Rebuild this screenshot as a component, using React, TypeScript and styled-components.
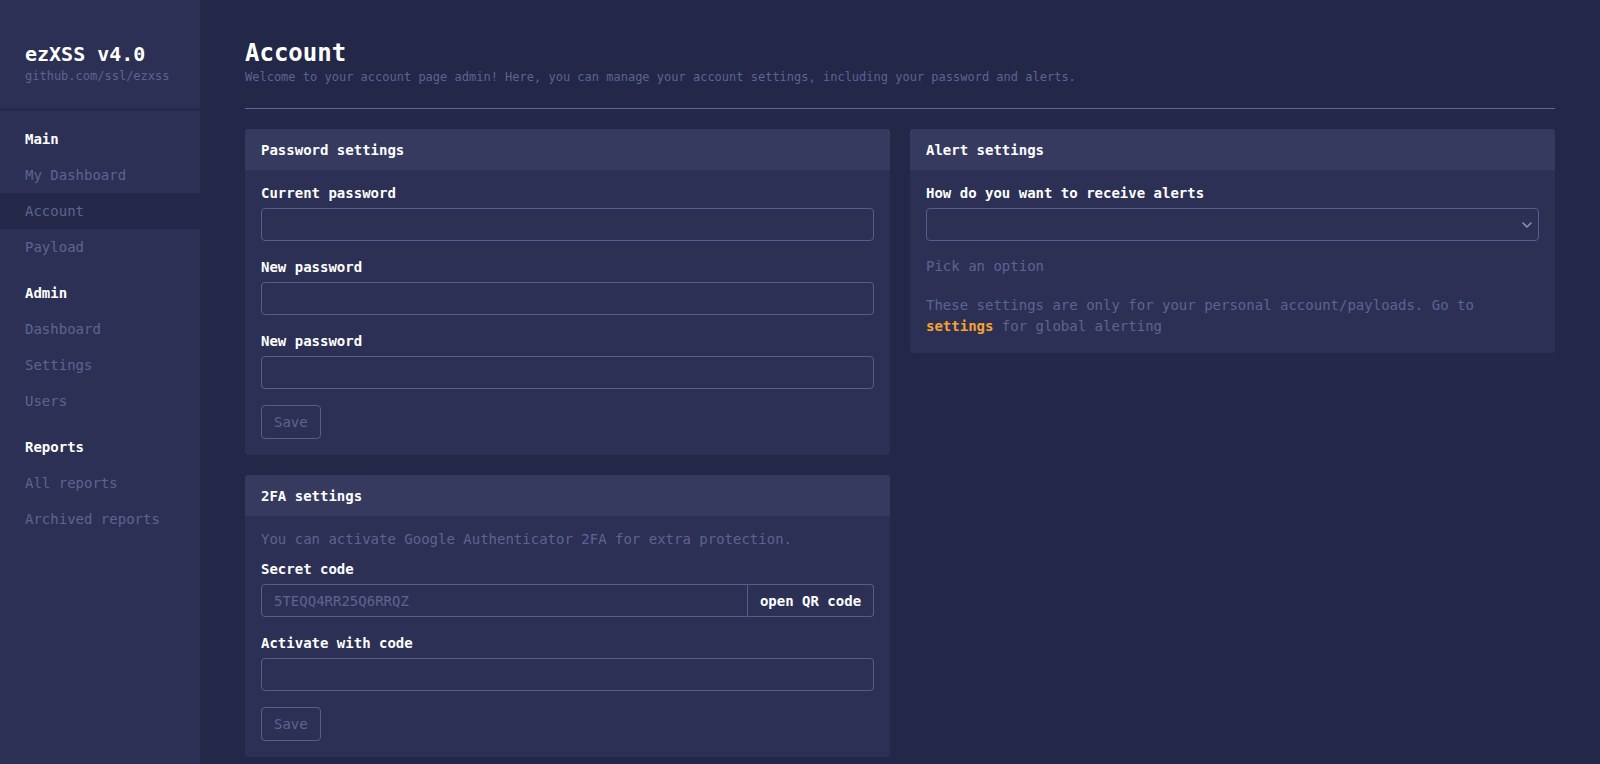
import styled, { createGlobalStyle } from "styled-components";

const GlobalStyle = createGlobalStyle`
  html, body {
    margin: 0;
    padding: 0;
    background: #232748;
  }
  * {
    box-sizing: border-box;
  }
  body {
    font-family: "DejaVu Sans Mono", "Liberation Mono", monospace;
    color: #ffffff;
  }
`;

const Layout = styled.div`
  display: flex;
  min-height: 100vh;
`;

const Sidebar = styled.aside`
  width: 200px;
  flex-shrink: 0;
  background: #2c3055;
  display: flex;
  flex-direction: column;
`;

const Brand = styled.div`
  height: 111px;
  padding: 42px 25px 0;
  border-bottom: 3px solid #262a4c;
`;

const BrandName = styled.div`
  font-size: 20px;
  line-height: 24px;
  font-weight: bold;
  color: #ffffff;
`;

const BrandLink = styled.div`
  margin-top: 2px;
  font-size: 12px;
  line-height: 16px;
  color: #5d6492;
`;

const Nav = styled.nav`
  display: flex;
  flex-direction: column;
`;

const NavHeading = styled.div`
  margin-top: 10px;
  height: 36px;
  display: flex;
  align-items: center;
  padding-left: 25px;
  font-size: 14px;
  font-weight: bold;
  color: #ffffff;
`;

const NavItem = styled.a<{ $active?: boolean }>`
  height: 36px;
  display: flex;
  align-items: center;
  padding-left: 25px;
  font-size: 14px;
  color: #5d6492;
  text-decoration: none;
  background: ${(p) => (p.$active ? "#242849" : "transparent")};
`;

const Main = styled.main`
  flex: 1;
  padding: 39px 45px 0;
  background: #232748;
`;

const Title = styled.h1`
  margin: 0;
  font-size: 24px;
  line-height: 28px;
  font-weight: bold;
  color: #ffffff;
`;

const Subtitle = styled.p`
  margin: 2px 0 0;
  font-size: 12px;
  line-height: 16px;
  color: #5d6492;
`;

const Divider = styled.hr`
  margin: 23px 0 20px;
  border: 0;
  border-top: 1px solid #5f6690;
`;

const Grid = styled.div`
  display: grid;
  grid-template-columns: 1fr 1fr;
  gap: 20px;
  align-items: start;
`;

const Column = styled.div`
  display: flex;
  flex-direction: column;
  gap: 20px;
`;

const Card = styled.section`
  background: #2c3055;
  border-radius: 3px;
  overflow: hidden;
`;

const CardHeader = styled.div`
  height: 41px;
  display: flex;
  align-items: center;
  padding: 0 16px;
  background: #363a5f;
  font-size: 14px;
  font-weight: bold;
  color: #ffffff;
`;

const CardBody = styled.div`
  padding: 13px 16px 16px;
  display: flex;
  flex-direction: column;
`;

const Label = styled.label`
  font-size: 14px;
  line-height: 20px;
  font-weight: bold;
  color: #ffffff;
  margin-bottom: 5px;
`;

const Input = styled.input`
  height: 33px;
  width: 100%;
  margin-bottom: 16px;
  padding: 0 12px;
  background: transparent;
  border: 1px solid #585e88;
  border-radius: 4px;
  font-family: inherit;
  font-size: 14px;
  color: #5d6492;
  outline: none;
`;

const InputGroup = styled.div`
  display: flex;
  margin-bottom: 16px;
`;

const GroupInput = styled(Input)`
  flex: 1;
  margin-bottom: 0;
  border-radius: 4px 0 0 4px;
`;

const Addon = styled.button`
  width: 126px;
  height: 33px;
  flex-shrink: 0;
  background: transparent;
  border: 1px solid #585e88;
  border-left: 0;
  border-radius: 0 4px 4px 0;
  font-family: inherit;
  font-size: 14px;
  font-weight: bold;
  color: #ffffff;
`;

const SaveButton = styled.button`
  align-self: flex-start;
  height: 34px;
  padding: 0 12px;
  background: transparent;
  border: 1px solid #585e88;
  border-radius: 4px;
  font-family: inherit;
  font-size: 14px;
  color: #5d6492;
`;

const Muted = styled.p<{ $gap?: number }>`
  margin: ${(p) => p.$gap ?? 0}px 0 0;
  font-size: 14px;
  line-height: 21px;
  color: #5d6492;
`;

const Intro = styled(Muted)`
  margin-bottom: 9px;
`;

const SelectWrap = styled.div`
  position: relative;
`;

const Select = styled.select`
  appearance: none;
  width: 100%;
  height: 33px;
  padding: 0 12px;
  background: transparent;
  border: 1px solid #585e88;
  border-radius: 4px;
  font-family: inherit;
  font-size: 14px;
  color: #5d6492;
  outline: none;
`;

const Chevron = styled.svg`
  position: absolute;
  right: 6px;
  top: 13px;
  pointer-events: none;
`;

const Link = styled.a`
  color: #f7a230;
  font-weight: bold;
  text-decoration: none;
`;

const App = () => {
  return (
    <>
      <GlobalStyle />
      <Layout>
        <Sidebar>
          <Brand>
            <BrandName>ezXSS v4.0</BrandName>
            <BrandLink>github.com/ssl/ezxss</BrandLink>
          </Brand>
          <Nav>
            <NavHeading>Main</NavHeading>
            <NavItem>My Dashboard</NavItem>
            <NavItem $active>Account</NavItem>
            <NavItem>Payload</NavItem>
            <NavHeading>Admin</NavHeading>
            <NavItem>Dashboard</NavItem>
            <NavItem>Settings</NavItem>
            <NavItem>Users</NavItem>
            <NavHeading>Reports</NavHeading>
            <NavItem>All reports</NavItem>
            <NavItem>Archived reports</NavItem>
          </Nav>
        </Sidebar>

        <Main>
          <Title>Account</Title>
          <Subtitle>
            Welcome to your account page admin! Here, you can manage your account settings,
            including your password and alerts.
          </Subtitle>
          <Divider />

          <Grid>
            <Column>
              <Card>
                <CardHeader>Password settings</CardHeader>
                <CardBody>
                  <Label>Current password</Label>
                  <Input type="password" />
                  <Label>New password</Label>
                  <Input type="password" />
                  <Label>New password</Label>
                  <Input type="password" />
                  <SaveButton>Save</SaveButton>
                </CardBody>
              </Card>

              <Card>
                <CardHeader>2FA settings</CardHeader>
                <CardBody>
                  <Intro>You can activate Google Authenticator 2FA for extra protection.</Intro>
                  <Label>Secret code</Label>
                  <InputGroup>
                    <GroupInput defaultValue="5TEQQ4RR25Q6RRQZ" readOnly />
                    <Addon>open QR code</Addon>
                  </InputGroup>
                  <Label>Activate with code</Label>
                  <Input />
                  <SaveButton>Save</SaveButton>
                </CardBody>
              </Card>
            </Column>

            <Column>
              <Card>
                <CardHeader>Alert settings</CardHeader>
                <CardBody>
                  <Label>How do you want to receive alerts</Label>
                  <SelectWrap>
                    <Select defaultValue="">
                      <option value=""></option>
                    </Select>
                    <Chevron width="12" height="8" viewBox="0 0 12 8">
                      <path d="M2 2l4 4 4-4" fill="none" stroke="#8a90b8" strokeWidth="1.6" strokeLinecap="round" strokeLinejoin="round" />
                    </Chevron>
                  </SelectWrap>
                  <Muted $gap={15}>Pick an option</Muted>
                  <Muted $gap={18}>
                    These settings are only for your personal account/payloads. Go to{" "}
                    <Link>settings</Link> for global alerting
                  </Muted>
                </CardBody>
              </Card>
            </Column>
          </Grid>
        </Main>
      </Layout>
    </>
  );
};

export default App;
